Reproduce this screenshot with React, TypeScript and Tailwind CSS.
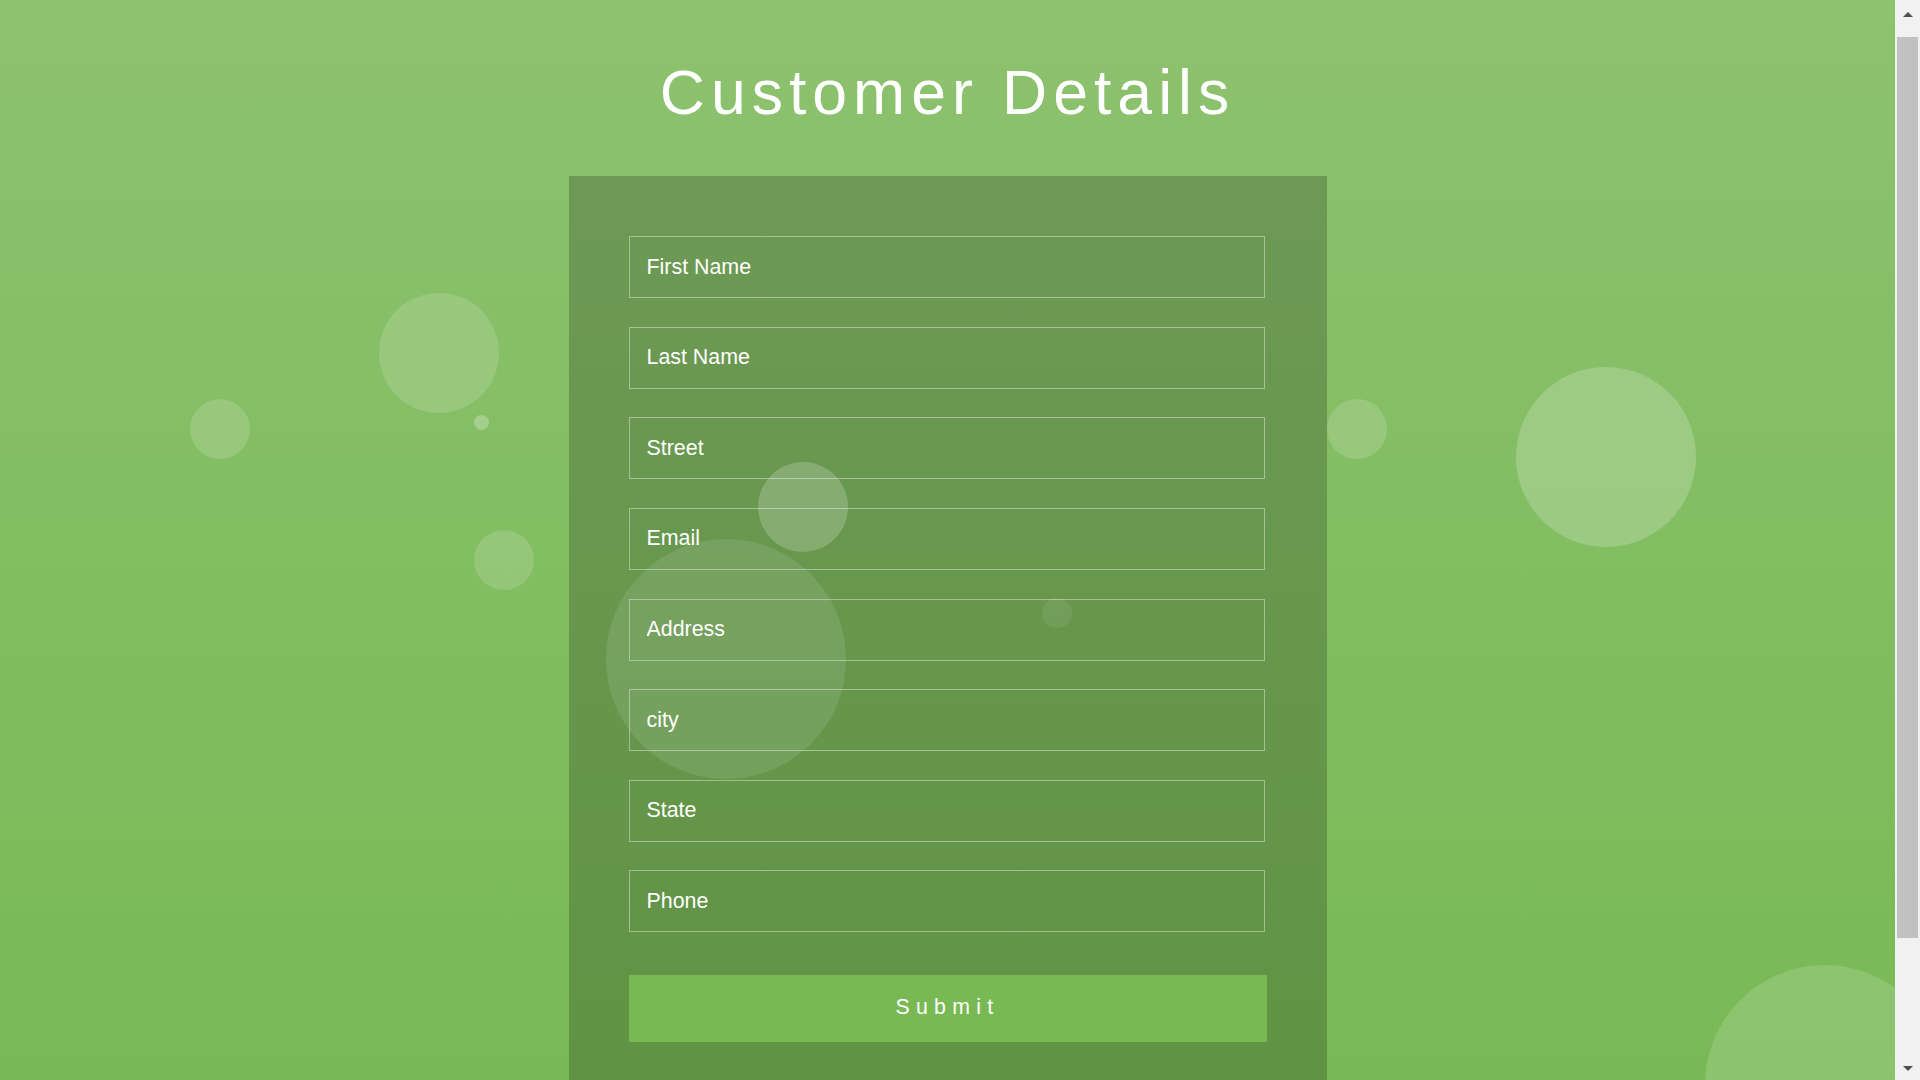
import React from "react";

const fields = ["First Name", "Last Name", "Street", "Email", "Address", "city", "State", "Phone"];

// floating bubbles, placed where they sit in the frame
const bubbles = [
  "left-[379px] top-[293px] w-[120px] h-[120px] bg-white/15",
  "left-[190px] top-[399px] w-[60px] h-[60px] bg-white/15",
  "left-[474px] top-[415px] w-[15px] h-[15px] bg-white/25",
  "left-[474px] top-[530px] w-[60px] h-[60px] bg-white/15",
  "left-[1327px] top-[399px] w-[60px] h-[60px] bg-white/15",
  "left-[1516px] top-[367px] w-[180px] h-[180px] bg-white/20",
  "left-[606px] top-[539px] w-[240px] h-[240px] bg-white/10",
  "left-[1042px] top-[598px] w-[30px] h-[30px] bg-white/[0.07]",
  "left-[758px] top-[462px] w-[90px] h-[90px] bg-white/20",
  "left-[1705px] top-[965px] w-[240px] h-[240px] bg-white/15",
];

const ScrollBar: React.FC = () => (
  <div className="flex h-screen w-[25px] shrink-0 flex-col bg-[#f1f1f1]">
    <div className="flex h-[35px] flex-col items-center pt-[12px]">
      <div className="h-0 w-0 border-x-[5px] border-b-[5px] border-x-transparent border-b-[#505050]" />
    </div>
    <div className="mx-[2px] mt-[2px] h-[901px] bg-[#c1c1c1]" />
    <div className="flex-1" />
    <div className="flex h-[35px] flex-col items-center pt-[21px]">
      <div className="h-0 w-0 border-x-[5px] border-t-[5px] border-x-transparent border-t-[#505050]" />
    </div>
  </div>
);

const App: React.FC = () => {
  return (
    <div className="flex h-screen w-full overflow-hidden">
      <div className="h-screen flex-1 overflow-y-auto [scrollbar-width:none]">
        <div className="relative min-h-[1205px] overflow-hidden bg-linear-to-b from-[#8dc26f] to-[#76b852] font-['Liberation_Sans',Arial,sans-serif]">
          <div className="relative z-10 flex flex-col items-center pt-[61px]">
            <h1 className="text-[62.5px] leading-[62.5px] font-normal tracking-[6px] text-white">
              Customer Details
            </h1>
            <form
              className="mt-[52.4px] flex w-[758px] flex-col items-center bg-black/20 px-[60px] pt-[60.3px] pb-[60px]"
              onSubmit={(e) => e.preventDefault()}
            >
              <div className="flex w-full flex-col gap-[28.6px]">
                {fields.map((f) => (
                  <input
                    key={f}
                    type="text"
                    placeholder={f}
                    className="h-[62px] w-[636px] border border-white/40 bg-transparent px-[17px] text-[21.4px] text-white outline-none placeholder:text-white"
                  />
                ))}
              </div>
              <button
                type="submit"
                className="mt-[42.5px] h-[67px] w-[638px] bg-[#78b953] text-[21.3px] tracking-[6.3px] text-white"
              >
                Submit
              </button>
            </form>
          </div>
          <ul className="pointer-events-none absolute inset-0 z-20">
            {bubbles.map((b, i) => (
              <li key={i} className={"absolute rounded-full " + b} />
            ))}
          </ul>
        </div>
      </div>
      <ScrollBar />
    </div>
  );
};

export default App;
